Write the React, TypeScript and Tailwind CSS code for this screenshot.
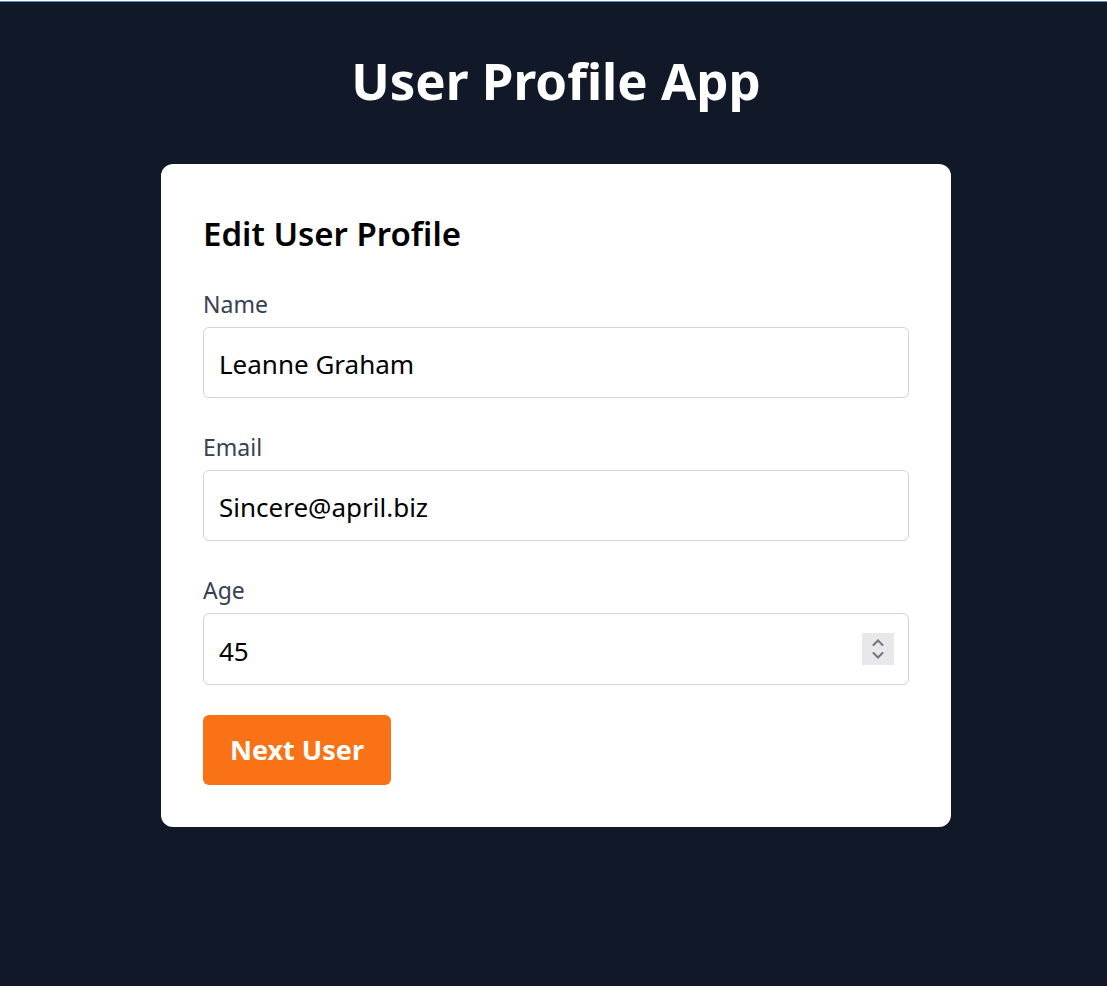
import React, { useState } from 'react';

type User = {
  name: string;
  email: string;
  age: number;
};

const users: User[] = [
  { name: 'Leanne Graham', email: 'Sincere@april.biz', age: 45 },
  { name: 'Ervin Howell', email: 'Shanna@melissa.tv', age: 32 },
  { name: 'Clementine Bauch', email: 'Nathan@yesenia.net', age: 28 },
];

const App: React.FC = () => {
  const [index, setIndex] = useState(0);
  const [user, setUser] = useState<User>(users[0]);

  const nextUser = () => {
    const next = (index + 1) % users.length;
    setIndex(next);
    setUser(users[next]);
  };

  return (
    <div className="min-h-screen bg-[#111827] font-['Noto_Sans',sans-serif]">
      <div className="h-px mt-px bg-[#5b8fb9]" />
      <h1 className="mt-[54px] pl-[5px] text-center text-[51px] leading-[48px] font-bold text-white">User Profile App</h1>
      <div className="mt-[60px] flex justify-center pl-[5px]">
        <div className="w-[790px] rounded-xl bg-white px-[42px] pt-[42px] pb-[42px]">
          <h2 className="text-[33px] leading-[56px] font-semibold text-black">Edit User Profile</h2>
          <div className="mt-[27px]">
            <label className="block text-[23px] leading-[30px] text-[#374151] mb-2">Name</label>
            <input
              type="text"
              value={user.name}
              onChange={(e) => setUser({ ...user, name: e.target.value })}
              className="block w-full h-[71px] rounded-md border border-[#d1d5db] px-[15px] pt-[3px] text-[26px] text-black outline-none"
            />
          </div>
          <div className="mt-[34px]">
            <label className="block text-[23px] leading-[30px] text-[#374151] mb-2">Email</label>
            <input
              type="email"
              value={user.email}
              onChange={(e) => setUser({ ...user, email: e.target.value })}
              className="block w-full h-[71px] rounded-md border border-[#d1d5db] px-[15px] pt-[3px] text-[26px] text-black outline-none"
            />
          </div>
          <div className="mt-[34px]">
            <label className="block text-[23px] leading-[30px] text-[#374151] mb-2">Age</label>
            <div className="relative">
              <input
                type="text"
                inputMode="numeric"
                value={user.age}
                onChange={(e) => setUser({ ...user, age: Number(e.target.value) || 0 })}
                className="block w-full h-[72px] rounded-md border border-[#d1d5db] px-[15px] pt-[3px] text-[26px] text-black outline-none"
              />
              {/* spin buttons */}
              <div className="absolute right-[15px] top-[20px] flex h-8 w-8 flex-col items-center justify-center gap-[6px] bg-[#e8e8ec]">
                <svg width="12" height="7" viewBox="0 0 12 7" fill="none" stroke="#74747c" strokeWidth="2" strokeLinecap="round">
                  <path d="M1.5 6 L6 1.5 L10.5 6" />
                </svg>
                <svg width="12" height="7" viewBox="0 0 12 7" fill="none" stroke="#74747c" strokeWidth="2" strokeLinecap="round">
                  <path d="M1.5 1 L6 5.5 L10.5 1" />
                </svg>
              </div>
            </div>
          </div>
          <button
            onClick={nextUser}
            className="mt-[30px] h-[70px] w-[188px] rounded-md bg-[#f97316] text-[27px] font-bold text-white"
          >
            Next User
          </button>
        </div>
      </div>
    </div>
  );
};

export default App;
